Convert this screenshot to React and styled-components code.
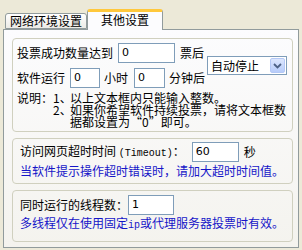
import React from "react";
import styled, { createGlobalStyle } from "styled-components";

const Global = createGlobalStyle`
  html, body { margin: 0; padding: 0; background: #ECE9D8; }
  body {
    font-family: "Noto Sans CJK SC", "Noto Sans", sans-serif;
    font-size: 12px;
    color: #000;
  }
`;

const Window = styled.div`
  width: 302px;
  height: 250px;
  padding: 0 0 0 3px;
  box-sizing: border-box;
  background: #ECE9D8;
`;

const TabStrip = styled.div`
  display: flex;
  align-items: flex-end;
  height: 29px;
  padding-left: 2px;
  position: relative;
  z-index: 1;
`;

const Tab = styled.div`
  box-sizing: border-box;
  height: ${(p) => (p.$active ? "21px" : "16px")};
  width: ${(p) => (p.$active ? "76px" : "82px")};
  margin-bottom: ${(p) => (p.$active ? "-1px" : "0")};
  display: flex;
  align-items: center;
  justify-content: center;
  border: 1px solid #919B9C;
  border-bottom: ${(p) => (p.$active ? "none" : "1px solid #919B9C")};
  border-top: ${(p) => (p.$active ? "3px solid #FFC83C" : "1px solid #919B9C")};
  border-radius: 3px 3px 0 0;
  background: ${(p) =>
    p.$active ? "#FCFCFE" : "linear-gradient(#FFFFFF, #ECEBE6)"};
  line-height: 12px;
  padding-bottom: ${(p) => (p.$active ? "2px" : "0")};
`;

const Panel = styled.div`
  box-sizing: border-box;
  width: 296px;
  height: 219px;
  border: 1px solid #919B9C;
  background: linear-gradient(#FCFCFE, #F4F3EE);
  padding: 8px 5px 5px 8px;
  display: flex;
  flex-direction: column;
  gap: 6px;
`;

const Group = styled.div`
  box-sizing: border-box;
  border: 1px solid #D0D0BF;
  border-radius: 4px;
  padding: ${(p) => p.$pad};
  display: flex;
  flex-direction: column;
  flex-grow: ${(p) => (p.$grow ? 1 : 0)};
`;

const TopArea = styled.div`
  display: flex;
  align-items: center;
`;

const Rows = styled.div`
  display: flex;
  flex-direction: column;
  gap: 5px;
`;

const Row = styled.div`
  display: flex;
  align-items: center;
  height: 20px;
  white-space: nowrap;
`;

const Label = styled.span`
  line-height: 12px;
  margin-left: ${(p) => p.$ml || 0}px;
  margin-right: ${(p) => p.$mr || 0}px;
`;

const Input = styled.div`
  box-sizing: border-box;
  width: ${(p) => p.$w}px;
  height: ${(p) => p.$h || 20}px;
  border: 1px solid #7F9DB9;
  background: #fff;
  font-family: "DejaVu Sans", sans-serif;
  font-size: 11px;
  line-height: 17px;
  padding-left: 3px;
  margin-left: ${(p) => p.$ml || 0}px;
`;

const Select = styled.div`
  box-sizing: border-box;
  width: 80px;
  height: 19px;
  margin-left: 2px;
  border: 1px solid #7F9DB9;
  background: #fff;
  display: flex;
  align-items: center;
  justify-content: space-between;
  padding: 1px 1px 1px 3px;
  line-height: 12px;
`;

const DropButton = styled.div`
  box-sizing: border-box;
  width: 15px;
  height: 15px;
  border: 1px solid #B4C8F6;
  border-radius: 2px;
  background: linear-gradient(#DCE6FD, #B7CCFA);
  display: flex;
  align-items: center;
  justify-content: center;
`;

const Notes = styled.div`
  display: grid;
  grid-template-columns: 36px 17px auto;
  margin-top: 4px;
  line-height: 12px;
  white-space: nowrap;
`;

const Blue = styled.div`
  color: #1515C8;
  line-height: 12px;
  margin-top: ${(p) => p.$mt || 0}px;
  white-space: nowrap;
`;

const Mono = styled.span`
  font-family: "Liberation Mono", monospace;
  font-size: 10px;
`;

export default function App() {
  return (
    <>
      <Global />
      <Window>
        <TabStrip>
          <Tab>网络环境设置</Tab>
          <Tab $active>其他设置</Tab>
        </TabStrip>
        <Panel>
          <Group $pad="4px 4px 3px 4px">
            <TopArea>
              <Rows>
                <Row>
                  <Label>投票成功数量达到</Label>
                  <Input $w={57} $ml={5}>0</Input>
                  <Label $ml={5}>票后</Label>
                </Row>
                <Row>
                  <Label>软件运行</Label>
                  <Input $w={30} $ml={5}>0</Input>
                  <Label $ml={4}>小时</Label>
                  <Input $w={31} $ml={6}>0</Input>
                  <Label $ml={4}>分钟后</Label>
                </Row>
              </Rows>
              <Select>
                <span>自动停止</span>
                <DropButton>
                  <svg width="9" height="6" viewBox="0 0 9 6">
                    <path d="M1 1 L4.5 4.5 L8 1" fill="none" stroke="#4D6185" strokeWidth="1.8" />
                  </svg>
                </DropButton>
              </Select>
            </TopArea>
            <Notes>
              <span>说明：</span>
              <span>1、</span>
              <span>以上文本框内只能输入整数。</span>
              <span></span>
              <span>2、</span>
              <span>如果你希望软件持续投票，请将文本框数</span>
              <span></span>
              <span></span>
              <span>据都设置为“0”即可。</span>
            </Notes>
          </Group>
          <Group $pad="3px 4px 6px 7px">
            <Row>
              <Label>
                访问网页超时时间 <Mono>(Timeout)</Mono>：
              </Label>
              <Input $w={47} $ml={7}>60</Input>
              <Label $ml={5}>秒</Label>
            </Row>
            <Blue $mt={3}>当软件提示操作超时错误时，请加大超时时间值。</Blue>
          </Group>
          <Group $pad="4px 4px 7px 7px" $grow>
            <Row>
              <Label>同时运行的线程数：</Label>
              <Input $w={46} $ml={0}>1</Input>
            </Row>
            <Blue $mt={2}>
              多线程仅在使用固定<Mono>ip</Mono>或代理服务器投票时有效。
            </Blue>
          </Group>
        </Panel>
      </Window>
    </>
  );
}
